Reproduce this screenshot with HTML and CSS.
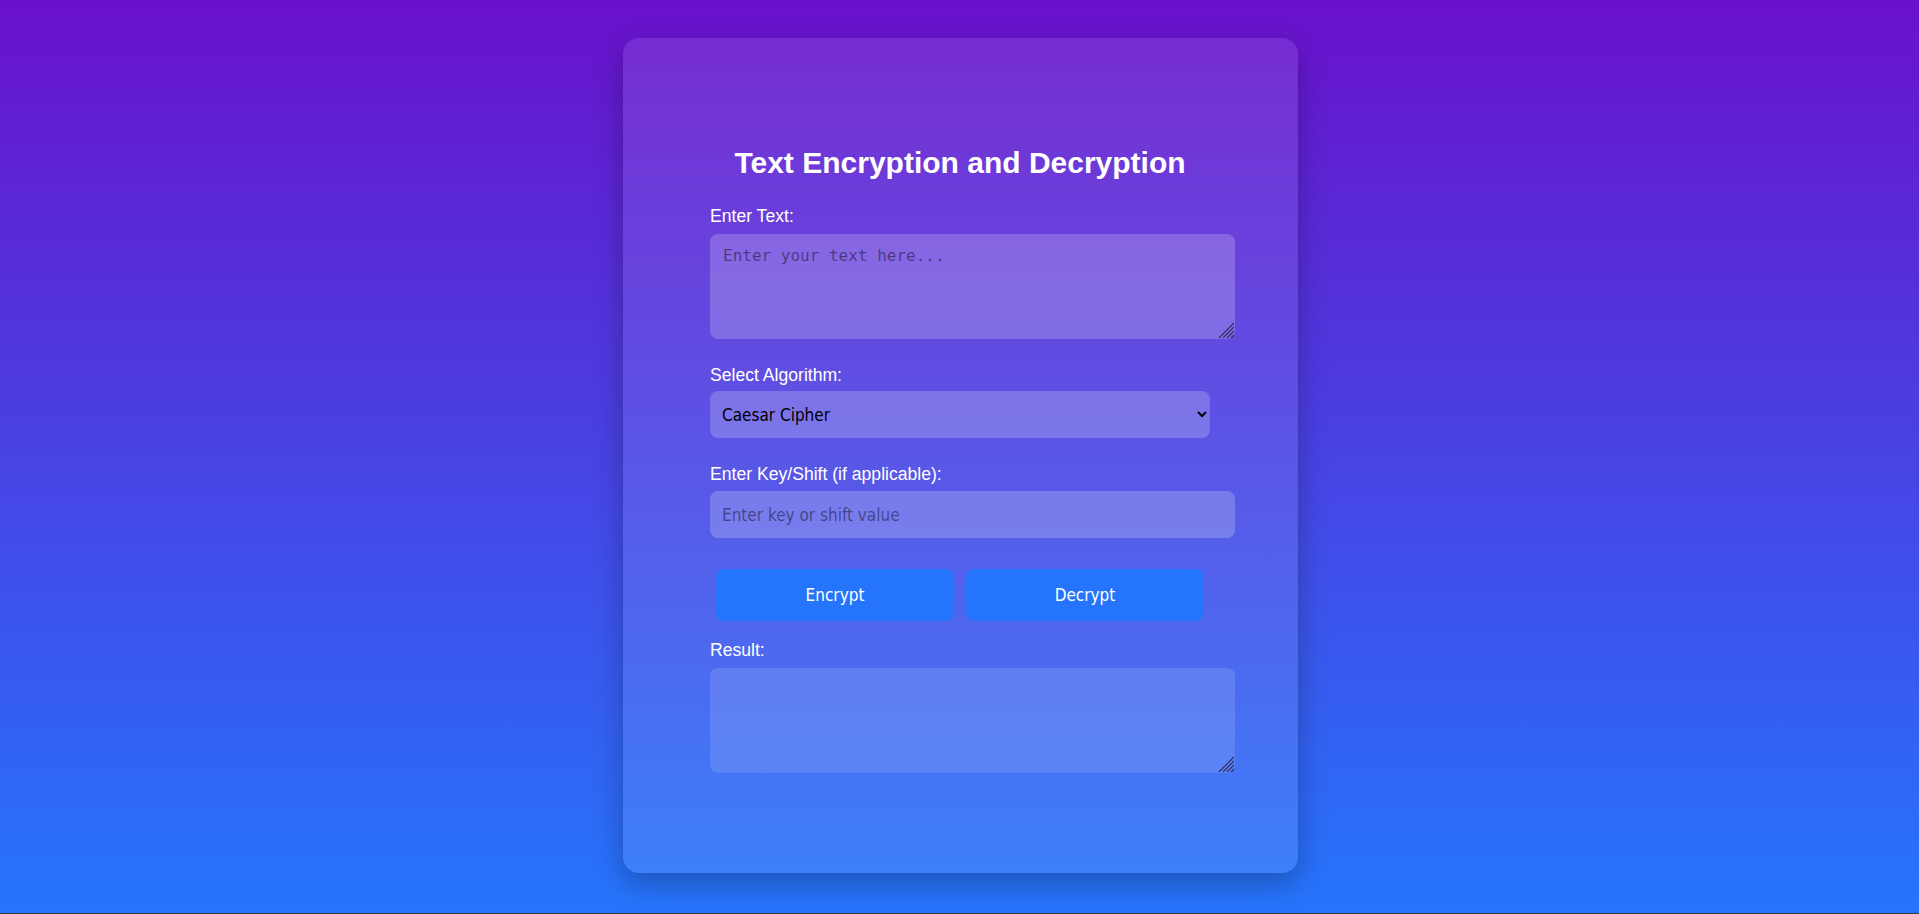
FILE: index.html
```html
<!DOCTYPE html>
<html lang="en">
<head>
<meta charset="utf-8">
<title>Text Encryption and Decryption</title>
<link rel="stylesheet" href="styles.css">
</head>
<body>
<div class="card">
  <h1 class="title">Text Encryption and Decryption</h1>
  <label class="label" for="inputText">Enter Text:</label>
  <div class="area-wrap area-wrap-input">
    <textarea id="inputText" class="area" placeholder="Enter your text here..."></textarea>
    <svg class="grip" width="16" height="16" viewBox="0 0 16 16" aria-hidden="true">
      <path d="M1 16 L16 1 M5 16 L16 5 M9 16 L16 9 M13 16 L16 13"/>
    </svg>
  </div>
  <label class="label label-select" for="algorithm">Select Algorithm:</label>
  <select id="algorithm" class="select">
    <option>Caesar Cipher</option>
    <option>Vigenère Cipher</option>
    <option>Base64</option>
  </select>
  <label class="label label-key" for="key">Enter Key/Shift (if applicable):</label>
  <input id="key" class="field" type="text" placeholder="Enter key or shift value">
  <div class="actions">
    <button class="btn" type="button">Encrypt</button>
    <button class="btn" type="button">Decrypt</button>
  </div>
  <label class="label" for="result">Result:</label>
  <div class="area-wrap">
    <textarea id="result" class="area area-result" readonly></textarea>
    <svg class="grip" width="16" height="16" viewBox="0 0 16 16" aria-hidden="true">
      <path d="M1 16 L16 1 M5 16 L16 5 M9 16 L16 9 M13 16 L16 13"/>
    </svg>
  </div>
</div>
</body>
</html>
```
FILE: styles.css
```css
html {
  background: #3a3a3a;
}
body {
  margin: 0;
  padding-left: 2px;
  padding-top: 38px;
  box-sizing: border-box;
  height: 913px;
  background: linear-gradient(to bottom, #6a11cb, #2575fc);
  font-family: "Liberation Sans", Arial, sans-serif;
  color: #fff;
  overflow: hidden;
}
.card {
  box-sizing: border-box;
  width: 675px;
  margin: 0 auto;
  padding: 108px 88px 100px 87px;
  background: rgba(255, 255, 255, 0.1);
  border-radius: 16px;
  box-shadow: 0 10px 30px rgba(0, 0, 0, 0.27);
}
.title {
  margin: 0 0 26px;
  font-size: 30px;
  line-height: 34px;
  font-weight: bold;
  text-align: center;
}
.label {
  display: block;
  font-size: 17.6px;
  line-height: 20px;
  margin-bottom: 8px;
}
.label-select {
  margin-bottom: 6px;
}
.label-key {
  margin-bottom: 7px;
}
.area-wrap {
  position: relative;
  width: 525px;
  height: 105px;
}
.area-wrap-input {
  margin-bottom: 26px;
}
.grip {
  position: absolute;
  right: 1px;
  bottom: 1px;
  pointer-events: none;
}
.grip path {
  stroke: #2e2755;
  stroke-width: 1.1;
  fill: none;
}
.area,
.field,
.select {
  display: block;
  box-sizing: border-box;
  border: none;
  border-radius: 8px;
  background: rgba(255, 255, 255, 0.2);
  color: #000;
  outline: none;
}
.area {
  width: 525px;
  height: 105px;
  padding: 12px 13px;
  resize: none;
  font-family: "DejaVu Sans Mono", monospace;
  font-size: 16px;
}
.area-result {
  background: rgba(255, 255, 255, 0.12);
}
.select {
  width: 500px;
  height: 47px;
  padding: 0 8px;
  margin-bottom: 26px;
  font-family: "DejaVu Sans", sans-serif;
  font-stretch: condensed;
  font-size: 17px;
}
.field {
  width: 525px;
  height: 47px;
  padding: 0 12px;
  margin-bottom: 31px;
  font-family: "DejaVu Sans", sans-serif;
  font-stretch: condensed;
  font-size: 17px;
}
.area::placeholder,
.field::placeholder {
  color: rgba(0, 0, 0, 0.45);
}
.actions {
  display: flex;
  justify-content: space-around;
  margin-bottom: 19px;
}
.btn {
  width: 238px;
  height: 52px;
  border: none;
  border-radius: 8px;
  background: #2575fc;
  color: #fff;
  font-family: "DejaVu Sans", sans-serif;
  font-stretch: condensed;
  font-size: 17px;
  cursor: pointer;
}
```
